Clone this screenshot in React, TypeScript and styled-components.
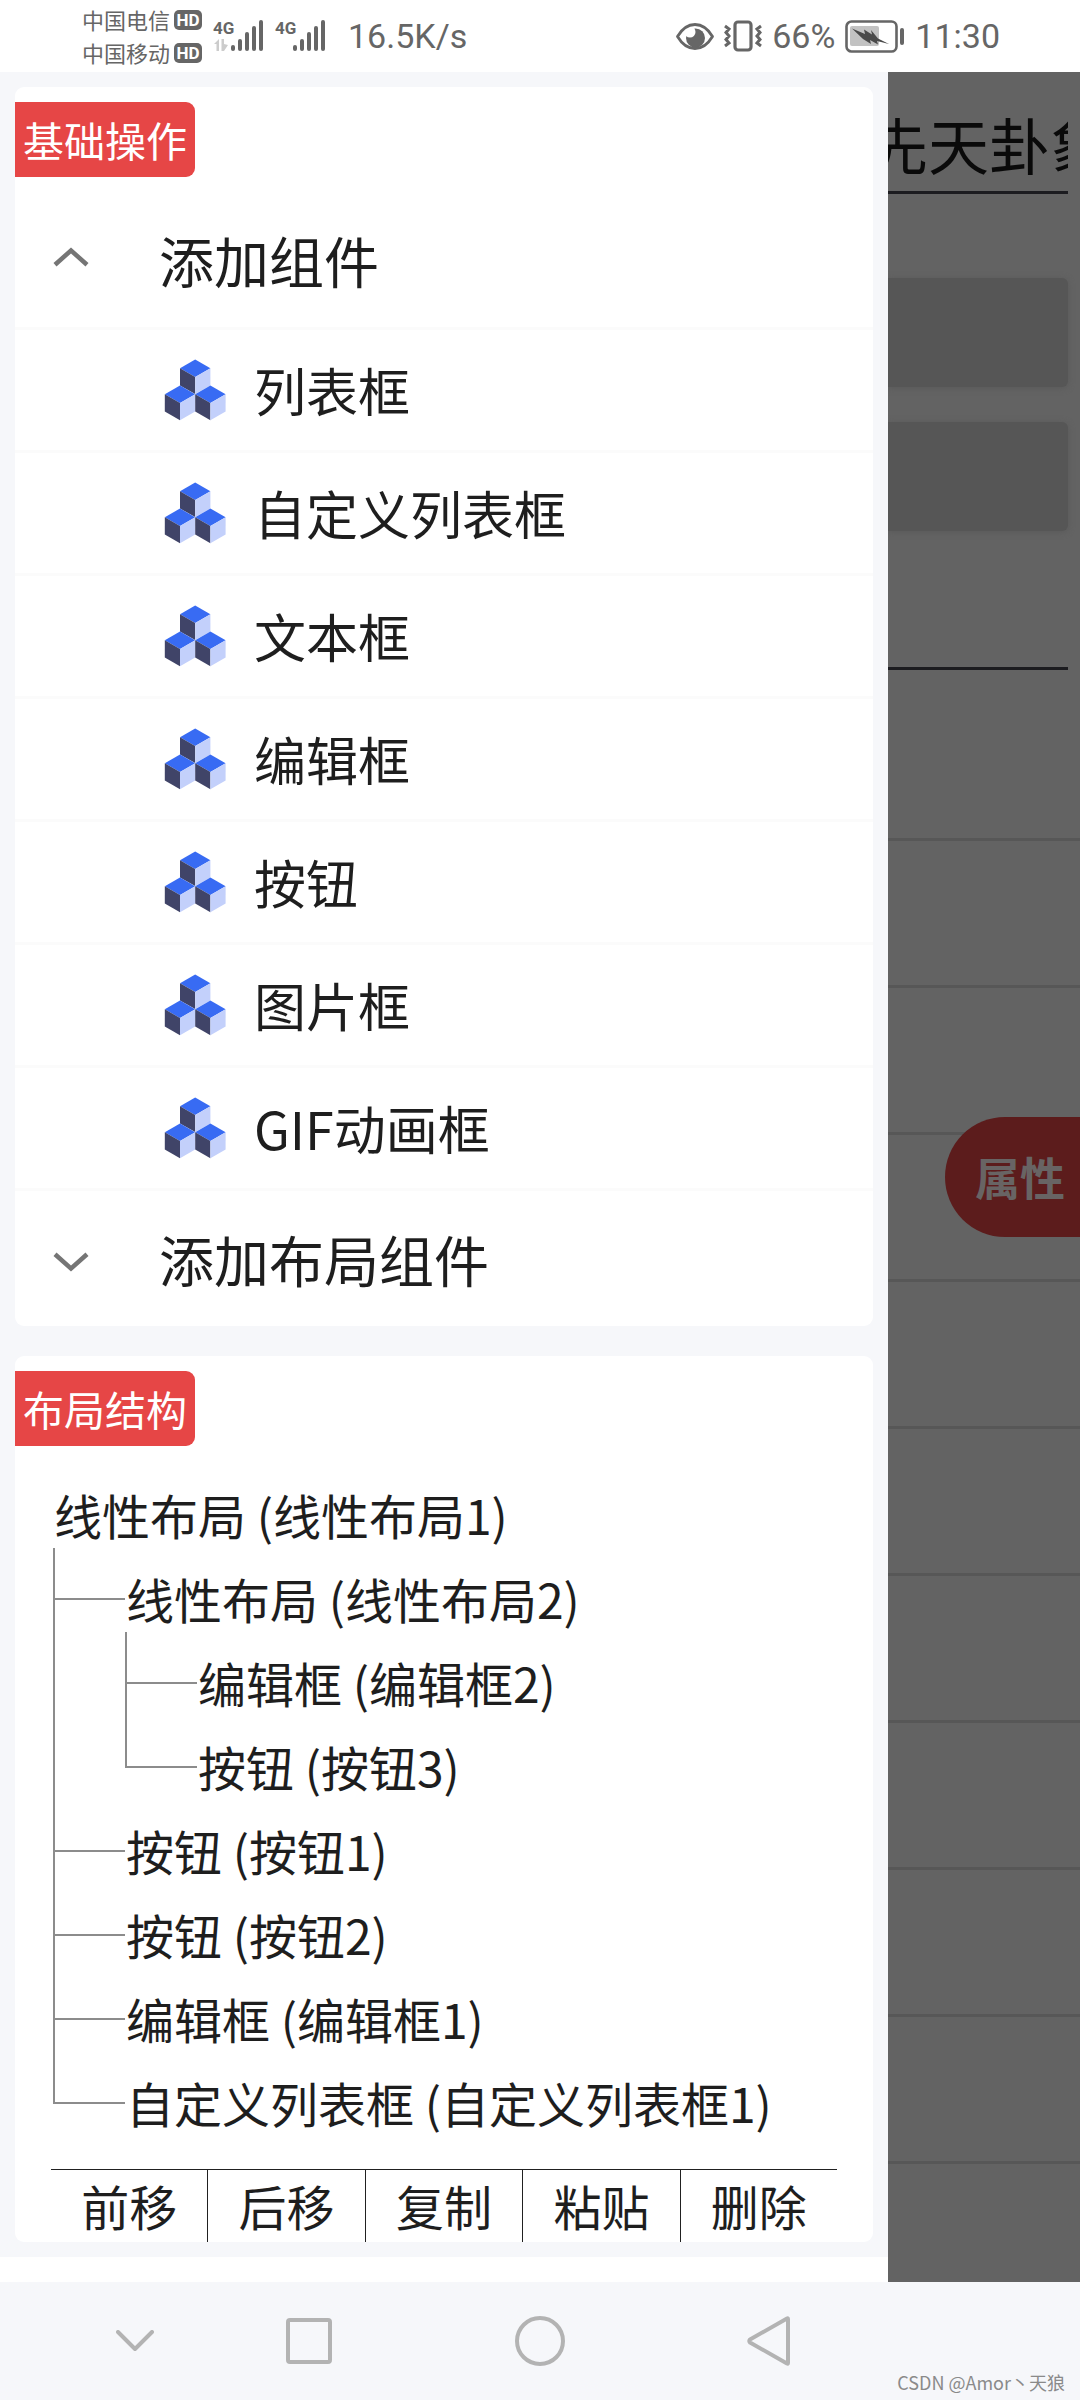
import React, { useState } from "react";
import styled, { createGlobalStyle } from "styled-components";

const Global = createGlobalStyle`
  *, *::before, *::after { box-sizing: border-box; }
  body {
    margin: 0;
    background: #ffffff;
    color: #1e1e1e;
    font-family: "Noto Sans CJK SC", "Noto Sans", sans-serif;
    font-weight: 400;
  }
  button, input { font: inherit; color: inherit; border: 0; padding: 0; margin: 0; background: none; }
  button { cursor: pointer; }
  ul { list-style: none; margin: 0; padding: 0; }
  svg { display: block; flex: none; }
`;

const Screen = styled.div`
  display: flex;
  flex-direction: column;
  min-height: 100vh;
  position: relative;
`;

/* ---------- status bar ---------- */

const StatusBar = styled.header`
  display: flex;
  justify-content: space-between;
  align-items: center;
  height: 72px;
  padding: 0 80px 0 82px;
  color: #666666;
`;

const StatusGroup = styled.div`
  display: flex;
  align-items: center;
  gap: 10px;
`;

const Carriers = styled.div`
  display: flex;
  flex-direction: column;
`;

const Carrier = styled.div`
  display: flex;
  align-items: center;
  gap: 4px;
  font-size: 22px;
  line-height: 33px;
`;

const HdBadge = styled.span`
  width: 28px;
  height: 20px;
  border-radius: 5px;
  background: #666666;
  color: #ffffff;
  font: 700 17px/20px Roboto, sans-serif;
  text-align: center;
`;

const StatusText = styled.span`
  font: 400 34px/40px Roboto, sans-serif;
`;

const SpeedText = styled(StatusText)`
  margin-left: 12px;
`;

/* ---------- body ---------- */

const Body = styled.main`
  display: flex;
  flex: 1;
`;

const Drawer = styled.aside`
  flex: none;
  width: 888px;
  background: #ffffff;
`;

const DrawerContent = styled.div`
  display: flex;
  flex-direction: column;
  gap: 30px;
  padding: 15px;
  background: #f6f7fa;
`;

const Card = styled.section`
  padding-top: 15px;
  border-radius: 9px;
  background: #ffffff;
`;

const Tag = styled.h2`
  width: fit-content;
  margin: 0;
  padding: 0 8px;
  border-radius: 0 9px 9px 0;
  background: #e64646;
  color: #ffffff;
  font-size: 41px;
  font-weight: 400;
  line-height: 75px;
`;

const Groups = styled.div`
  padding-top: 15px;
`;

const GroupHeader = styled.button<{ $divided?: boolean }>`
  display: flex;
  align-items: center;
  gap: 67px;
  width: 100%;
  padding-left: 38px;
  border-top: ${(p) => (p.$divided ? "3px solid #fbfbfb" : "0")};
  font-size: 55px;
  line-height: 135px;
`;

const Item = styled.button`
  display: flex;
  align-items: center;
  gap: 28px;
  width: 100%;
  padding-left: 149px;
  border-top: 3px solid #fbfbfb;
  font-size: 52px;
  line-height: 120px;
`;

/* ---------- layout tree ---------- */

const Tree = styled.div`
  padding: 38px 24px 33px 38px;
`;

const NodeLabel = styled.button`
  display: block;
  padding: 0 0 4px 1px;
  font-size: 48px;
  line-height: 60px;
  white-space: nowrap;
`;

const Branch = styled.li`
  display: flex;
`;

const Rail = styled.div`
  display: flex;
  flex-direction: column;
  flex: none;
  width: 72px;
`;

const Elbow = styled.div`
  height: 52px;
  border: solid #8c8c8c;
  border-width: 0 0 2px 2px;
`;

const Trunk = styled.div`
  flex: 1;
  border-left: 2px solid #8c8c8c;
`;

const BranchBody = styled.div`
  padding-top: 20px;
`;

const Toolbar = styled.div`
  display: flex;
  margin: 0 36px;
  border-top: 1px solid #212121;
`;

const ToolButton = styled.button`
  flex: 1;
  padding-bottom: 2px;
  font-size: 48px;
  line-height: 70px;

  & + & { border-left: 1px solid #212121; }
`;

/* ---------- dimmed editor behind the drawer ---------- */

const Editor = styled.section`
  position: relative;
  flex: 1;
  min-width: 0;
  overflow: hidden;
  background: #636363;
`;

const Form = styled.div`
  padding: 24px 12px 24px 0;
`;

const Title = styled.h1`
  margin: 0 0 84px;
  border-bottom: 3px solid #1c1c20;
  color: #0a0a0a;
  font-size: 61px;
  font-weight: 400;
  line-height: 95px;
  text-indent: -21px;
  white-space: nowrap;
  overflow: hidden;
`;

const PlainButton = styled.button`
  display: block;
  width: 100%;
  height: 109px;
  margin-bottom: 35px;
  border-radius: 0 6px 6px 0;
  background: #565656;
  box-shadow: 0 1px 6px #595959;
`;

const LineInput = styled.input`
  display: block;
  width: 100%;
  height: 104px;
  border-bottom: 3px solid #1c1c20;
  font-size: 48px;
`;

const ListRow = styled.li`
  height: 147px;
  border-bottom: 3px solid #575757;
`;

const PropertyButton = styled.button`
  position: absolute;
  right: 0;
  top: 1045px;
  padding: 0 15px 0 30px;
  border-radius: 60px 0 0 60px;
  background: #5c1c1c;
  color: #686464;
  font-size: 45px;
  font-weight: 700;
  line-height: 120px;
`;

/* ---------- navigation bar ---------- */

const NavBar = styled.nav`
  display: flex;
  height: 118px;
  padding-left: 77px;
  background: #f6f7fa;
`;

const NavButton = styled.button<{ $width: number }>`
  display: flex;
  align-items: center;
  justify-content: center;
  width: ${(p) => p.$width}px;
`;

const Watermark = styled.span`
  position: absolute;
  right: 15px;
  bottom: 4px;
  color: #8a8a8a;
  font-size: 18px;
  line-height: 28px;
`;

/* ---------- drawings ---------- */

const Signal = ({ arrows }: { arrows?: boolean }) => (
  <svg width="52" height="40" viewBox="0 -4 52 40" fill="#666">
    <text x="1" y="14" fontFamily="Roboto, sans-serif" fontWeight="700" fontSize="17">4G</text>
    {arrows && (
      <g fill="#ccc">
        <path d="M2 24l5-5v12H4.500V24z" />
        <path d="M9.500 19H12v5l4 1-4 6H9.500z" />
      </g>
    )}
    <rect x="19" y="25" width="4" height="6" rx="2" />
    <rect x="26" y="19" width="4" height="12" rx="2" />
    <rect x="33" y="12" width="4" height="19" rx="2" />
    <rect x="40" y="6" width="4" height="25" rx="2" />
    <rect x="47" y="0" width="4" height="31" rx="2" />
  </svg>
);

const Eye = () => (
  <svg width="38" height="27" viewBox="0 0 38 27">
    <circle cx="19.500" cy="15" r="9.500" fill="#666" />
    <circle cx="14" cy="9" r="5.500" fill="#fff" />
    <path d="M1.500 13.500C11-2.500 27-2.500 36.500 13.500 27 29.500 11 29.500 1.500 13.500z" fill="none" stroke="#666" strokeWidth="2.800" strokeLinejoin="round" />
  </svg>
);

const Vibrate = () => (
  <svg width="38" height="32" viewBox="0 0 38 32" fill="none" stroke="#666">
    <rect x="11" y="2" width="16" height="28" rx="3" strokeWidth="3.200" />
    <path d="M1 6l4 3-3 3.500L5 16l-3 3.500L5 23l-4 3M37 6l-4 3 3 3.500-3 3.500 3 3.500-3 3.500 4 3" strokeWidth="3" />
  </svg>
);

const Battery = () => (
  <svg width="60" height="33" viewBox="0 0 60 33">
    <rect x="1.500" y="1.500" width="50" height="30" rx="5" fill="none" stroke="#666" strokeWidth="2.600" />
    <rect x="5" y="6" width="29" height="20" rx="2" fill="#c2c2c2" />
    <path d="M7 8.500l13 5.500-1-4.500 8 5-1-4.500 7 8.500 11 5.500-12-3 1 3.500-8-4.500 1 4-8-5z" fill="#4a4a4a" />
    <rect x="55" y="8" width="4" height="17" rx="2" fill="#666" />
  </svg>
);

const Chevron = ({ up }: { up: boolean }) => (
  <svg width="39" height="30" viewBox="0 0 39 30" fill="#757575">
    {up ? (
      <path d="M18 2.500L35.500 18l-3 3.500L18 8.500 3.500 21.500l-3-3.500z" />
    ) : (
      <path d="M18 27.500L35.500 12l-3-3.500L18 21.500 3.500 8.500l-3 3.500z" />
    )}
  </svg>
);

const Cube = ({ x, y }: { x: number; y: number }) => (
  <g transform={`translate(${x} ${y})`}>
    <path d="M15.200 0l15.200 8.700-15.200 8.700L0 8.700z" fill="#386bf3" />
    <path d="M0 8.700l15.200 8.700v17.200L0 25.900z" fill="#404468" />
    <path d="M30.400 8.700L15.200 17.400v17.200l15.200-8.700z" fill="#c3d0fb" />
  </g>
);

const Cubes = () => (
  <svg width="62" height="62" viewBox="0 0 62 62">
    <Cube x={16} y={0.5} />
    <Cube x={0.8} y={26.6} />
    <Cube x={31.2} y={26.6} />
  </svg>
);

/* ---------- data ---------- */

const components = ["列表框", "自定义列表框", "文本框", "编辑框", "按钮", "图片框", "GIF动画框"];

type Node = { label: string; children?: Node[] };

const layout: Node = {
  label: "线性布局 (线性布局1)",
  children: [
    {
      label: "线性布局 (线性布局2)",
      children: [{ label: "编辑框 (编辑框2)" }, { label: "按钮 (按钮3)" }],
    },
    { label: "按钮 (按钮1)" },
    { label: "按钮 (按钮2)" },
    { label: "编辑框 (编辑框1)" },
    { label: "自定义列表框 (自定义列表框1)" },
  ],
};

const tools = ["前移", "后移", "复制", "粘贴", "删除"];

const TreeNode = ({ node }: { node: Node }) => (
  <>
    <NodeLabel type="button">{node.label}</NodeLabel>
    {node.children && (
      <ul>
        {node.children.map((child, i, all) => (
          <Branch key={child.label}>
            <Rail>
              <Elbow />
              {i < all.length - 1 && <Trunk />}
            </Rail>
            <BranchBody>
              <TreeNode node={child} />
            </BranchBody>
          </Branch>
        ))}
      </ul>
    )}
  </>
);

export default function App() {
  const [open, setOpen] = useState(true);

  return (
    <Screen>
      <Global />
      <StatusBar>
        <StatusGroup>
          <Carriers>
            <Carrier>中国电信<HdBadge>HD</HdBadge></Carrier>
            <Carrier>中国移动<HdBadge>HD</HdBadge></Carrier>
          </Carriers>
          <Signal arrows />
          <Signal />
          <SpeedText>16.5K/s</SpeedText>
        </StatusGroup>
        <StatusGroup>
          <Eye />
          <Vibrate />
          <StatusText>66%</StatusText>
          <Battery />
          <StatusText>11:30</StatusText>
        </StatusGroup>
      </StatusBar>

      <Body>
        <Drawer>
          <DrawerContent>
            <Card>
              <Tag>基础操作</Tag>
              <Groups>
                <GroupHeader type="button" aria-expanded={open} onClick={() => setOpen(!open)}>
                  <Chevron up={open} />
                  添加组件
                </GroupHeader>
                {open &&
                  components.map((name) => (
                    <Item type="button" key={name}>
                      <Cubes />
                      {name}
                    </Item>
                  ))}
                <GroupHeader type="button" aria-expanded={false} $divided>
                  <Chevron up={false} />
                  添加布局组件
                </GroupHeader>
              </Groups>
            </Card>

            <Card>
              <Tag>布局结构</Tag>
              <Tree>
                <TreeNode node={layout} />
              </Tree>
              <Toolbar>
                {tools.map((tool) => (
                  <ToolButton type="button" key={tool}>{tool}</ToolButton>
                ))}
              </Toolbar>
            </Card>
          </DrawerContent>
        </Drawer>

        <Editor>
          <Form>
            <Title>先天卦象</Title>
            <PlainButton type="button" aria-label="按钮1" />
            <PlainButton type="button" aria-label="按钮2" />
            <LineInput aria-label="编辑框1" />
          </Form>
          <ul>
            {Array.from({ length: 10 }, (_, i) => (
              <ListRow key={i} />
            ))}
          </ul>
          <PropertyButton type="button">属性</PropertyButton>
        </Editor>
      </Body>

      <NavBar>
        <NavButton type="button" aria-label="收起" $width={116}>
          <svg width="38" height="22" viewBox="0 0 38 22" fill="none" stroke="#b3b3b3" strokeWidth="4" strokeLinecap="round" strokeLinejoin="round">
            <path d="M2 2l17 17L36 2" />
          </svg>
        </NavButton>
        <NavButton type="button" aria-label="最近任务" $width={231}>
          <svg width="46" height="46" viewBox="0 0 46 46" fill="none" stroke="#b3b3b3" strokeWidth="4">
            <rect x="2" y="2" width="42" height="42" rx="2" />
          </svg>
        </NavButton>
        <NavButton type="button" aria-label="主页" $width={231}>
          <svg width="50" height="50" viewBox="0 0 50 50" fill="none" stroke="#b3b3b3" strokeWidth="4">
            <circle cx="25" cy="25" r="23" />
          </svg>
        </NavButton>
        <NavButton type="button" aria-label="返回" $width={231}>
          <svg width="48" height="50" viewBox="0 0 48 50" fill="none" stroke="#b3b3b3" strokeWidth="4" strokeLinejoin="round">
            <path d="M41 3v44q0 1-1 .5L3 26.500q-1.500-1.500 0-3L40 2.500q1-.5 1 .5z" />
          </svg>
        </NavButton>
      </NavBar>
      <Watermark>CSDN @Amor丶天狼</Watermark>
    </Screen>
  );
}
